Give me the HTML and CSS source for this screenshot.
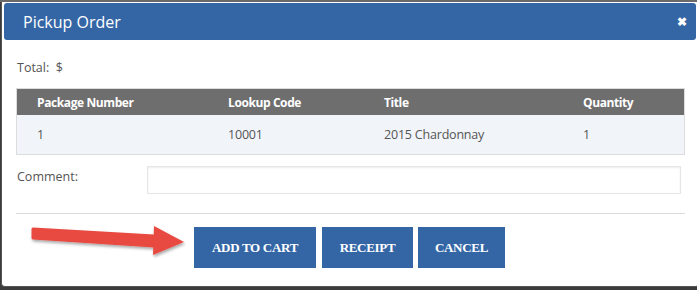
FILE: index.html
```html
<!DOCTYPE html>
<html lang="en">
<head>
  <meta charset="UTF-8">
  <title>Pickup Order</title>
  <link rel="stylesheet" href="styles.css">
</head>
<body>
  <div class="dialog">
    <div class="dialog-title">
      <span>Pickup Order</span>
      <span class="close">&#10006;</span>
    </div>
    <div class="dialog-body">
      <div class="total">Total:&nbsp; $</div>
      <table class="items">
        <thead>
          <tr>
            <th class="col-pkg">Package Number</th>
            <th class="col-code">Lookup Code</th>
            <th class="col-title">Title</th>
            <th>Quantity</th>
          </tr>
        </thead>
        <tbody>
          <tr>
            <td>1</td>
            <td>10001</td>
            <td>2015 Chardonnay</td>
            <td>1</td>
          </tr>
        </tbody>
      </table>
      <div class="comment-row">
        <label for="comment">Comment:</label>
        <input type="text" id="comment">
      </div>
      <hr>
      <div class="actions">
        <svg class="arrow" width="175" height="40" viewBox="0 0 175 40">
          <defs>
            <filter id="shadow" x="-10%" y="-30%" width="120%" height="160%">
              <feDropShadow dx="1" dy="2" stdDeviation="1.5" flood-color="#000" flood-opacity="0.35"/>
            </filter>
          </defs>
          <g filter="url(#shadow)" fill="#e8493f" stroke="none">
            <path d="M16 6 L137 13 L137 23 L16 15 Z" stroke="#e8493f" stroke-width="3" stroke-linejoin="round"/>
            <path d="M137 3 L167 19 L136 32 Z"/>
          </g>
        </svg>
        <button class="btn-cart">Add to Cart</button>
        <button class="btn-receipt">Receipt</button>
        <button class="btn-cancel">Cancel</button>
      </div>
    </div>
  </div>
</body>
</html>
```

FILE: styles.css
```css
body {
  margin: 0;
  background-color: #3b3b3b;
  font-family: 'Open Sans', sans-serif;
  color: #555;
  height: 290px;
  overflow: hidden;
  border-top: 2px solid #6a6a6a;
}
.dialog {
  margin-left: 1px;
  width: 692px;
  height: 281px;
  padding: 1px 2px 2px 2px;
  background: white;
  border: 1px solid #555;
  border-top: none;
  border-radius: 0 0 4px 4px;
}
.dialog-title {
  display: flex;
  justify-content: space-between;
  align-items: center;
  height: 37px;
  padding: 0 9px 0 19px;
  background-color: #3466a6;
  border-radius: 3px;
  color: white;
  font-size: 16px;
}
.close {
  font-size: 12px;
  font-weight: bold;
}
.dialog-body {
  padding: 0 11px 0 12px;
  font-size: 12.5px;
}
.total {
  margin-top: 19px;
  line-height: 18px;
  padding-left: 1px;
}
.items {
  width: 100%;
  margin-top: 11px;
  border-collapse: collapse;
  border: 1px solid #dcdcdc;
}
.items th {
  background-color: #6e6e6e;
  color: white;
  text-align: left;
  font-weight: bold;
  font-size: 12px;
  letter-spacing: -0.4px;
  height: 26px;
  padding: 0 0 0 20px;
}
.items td {
  background-color: #f1f4f9;
  height: 39px;
  padding: 0 0 0 20px;
  letter-spacing: -0.2px;
}
.col-pkg { width: 171px; }
.col-code { width: 136px; }
.col-title { width: 179px; }
.comment-row {
  display: flex;
  margin-top: 11px;
  padding-left: 1px;
}
.comment-row label {
  width: 130px;
  padding-top: 2px;
}
.comment-row input {
  width: 534px;
  height: 28px;
  box-sizing: border-box;
  border: 1px solid #e6e6e6;
  box-shadow: inset 0 1px 2px rgba(0, 0, 0, 0.08);
  margin: 0;
}
hr {
  border: none;
  border-top: 1px solid #dcdcdc;
  margin: 19px 0 0 0;
}
.actions {
  position: relative;
  display: flex;
  gap: 6px;
  margin-top: 13px;
  padding-left: 178px;
}
.actions button {
  height: 41px;
  padding: 0;
  border: none;
  background-color: #3466a6;
  color: white;
  font-family: 'Liberation Serif', serif;
  font-weight: bold;
  font-size: 13px;
  text-transform: uppercase;
  letter-spacing: -0.3px;
}
.btn-cart { width: 122px; }
.btn-receipt { width: 91px; }
.btn-cancel { width: 87px; margin-left: -1px; }
.arrow {
  position: absolute;
  left: 1px;
  top: -4px;
}
```
